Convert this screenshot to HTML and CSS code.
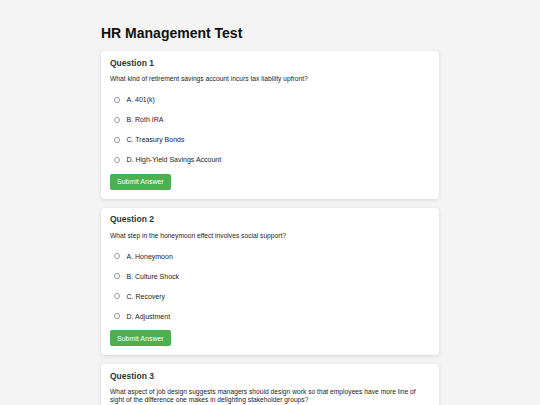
FILE: index.html
```html
<!DOCTYPE html>
<html lang="en">
<head>
    <meta charset="UTF-8">
    <meta name="viewport" content="width=device-width, initial-scale=1.0">
    <title>HR Management Test</title>
    <link rel="stylesheet" href="styles.css">
</head>
<body>
    <div class="container">
        <h1>HR Management Test</h1>

        <div class="question-card">
            <h3>Question 1</h3>
            <p class="question-text">What kind of retirement savings account incurs tax liability upfront?</p>
            <div class="options">
                <label class="option"><input type="radio" name="q1"> A. 401(k)</label>
                <label class="option"><input type="radio" name="q1"> B. Roth IRA</label>
                <label class="option"><input type="radio" name="q1"> C. Treasury Bonds</label>
                <label class="option"><input type="radio" name="q1"> D. High-Yield Savings Account</label>
            </div>
            <button class="submit-btn">Submit Answer</button>
        </div>

        <div class="question-card">
            <h3>Question 2</h3>
            <p class="question-text">What step in the honeymoon effect involves social support?</p>
            <div class="options">
                <label class="option"><input type="radio" name="q2"> A. Honeymoon</label>
                <label class="option"><input type="radio" name="q2"> B. Culture Shock</label>
                <label class="option"><input type="radio" name="q2"> C. Recovery</label>
                <label class="option"><input type="radio" name="q2"> D. Adjustment</label>
            </div>
            <button class="submit-btn">Submit Answer</button>
        </div>

        <div class="question-card">
            <h3>Question 3</h3>
            <p class="question-text">What aspect of job design suggests managers should design work so that employees have more line of sight of the difference one makes in delighting stakeholder groups?</p>
            <div class="options">
                <label class="option"><input type="radio" name="q3"> A. Task significance</label>
                <label class="option"><input type="radio" name="q3"> B. Task identity</label>
                <label class="option"><input type="radio" name="q3"> C. Skill variety</label>
                <label class="option"><input type="radio" name="q3"> D. Autonomy</label>
            </div>
            <button class="submit-btn">Submit Answer</button>
        </div>
    </div>
</body>
</html>
```

FILE: styles.css
```css
body {
    font-family: "Liberation Sans", Arial, sans-serif;
    background-color: #f4f4f4;
    margin: 0;
    color: #222;
}
.container {
    width: 338px;
    margin: 0 auto;
    padding-top: 24px;
}
h1 {
    font-size: 14px;
    line-height: 18px;
    margin: 0 0 9px;
    color: #111;
}
.question-card {
    background-color: white;
    border-radius: 4px;
    box-shadow: 0 1px 4px rgba(0,0,0,0.12);
    padding: 6.5px 9px 9px;
    margin-bottom: 9px;
}
.question-card h3 {
    font-size: 8.5px;
    line-height: 11px;
    margin: 0 0 6.5px;
    color: #333;
}
.question-text {
    font-size: 6.7px;
    line-height: 7.5px;
    margin: 0 0 7px;
}
.options {
    display: flex;
    flex-direction: column;
}
.option {
    display: flex;
    align-items: center;
    gap: 7px;
    height: 20px;
    font-size: 7px;
    padding-left: 3.5px;
}
/* small grey ring like the native radio */
.option input {
    appearance: none;
    width: 6px;
    height: 6px;
    margin: 0;
    border: 1px solid #999;
    border-radius: 50%;
    background: white;
}
.submit-btn {
    margin-top: 4px;
    background-color: #4caf50;
    color: white;
    border: none;
    border-radius: 2px;
    font-family: inherit;
    font-size: 7px;
    padding: 0 7px;
    height: 16px;
}
```
